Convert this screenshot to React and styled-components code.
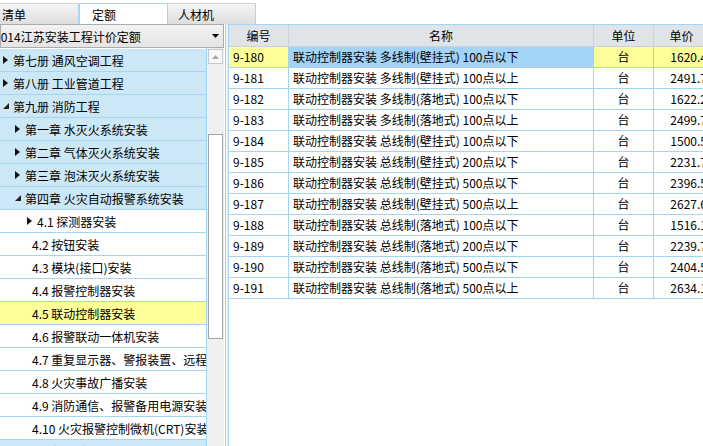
import styled, { createGlobalStyle } from 'styled-components'

const GlobalStyle = createGlobalStyle`
  html, body {
    margin: 0;
    padding: 0;
    background: #fff;
    overflow: hidden;
  }
  body {
    font-family: "Noto Sans CJK SC", "Noto Sans", sans-serif;
    font-size: 12px;
    color: #000;
  }
`

const treeRows = [
    { text: '第七册 通风空调工程', indent: 3, arrow: 'right', tone: 'blue' },
    { text: '第八册 工业管道工程', indent: 3, arrow: 'right', tone: 'blue' },
    { text: '第九册 消防工程', indent: 3, arrow: 'open', tone: 'blue' },
    { text: '第一章 水灭火系统安装', indent: 15, arrow: 'right', tone: 'blue' },
    { text: '第二章 气体灭火系统安装', indent: 15, arrow: 'right', tone: 'blue' },
    { text: '第三章 泡沫灭火系统安装', indent: 15, arrow: 'right', tone: 'blue' },
    { text: '第四章 火灾自动报警系统安装', indent: 15, arrow: 'open', tone: 'blue' },
    { text: '4.1 探测器安装', indent: 27, arrow: 'right', tone: 'white' },
    { text: '4.2 按钮安装', indent: 32, tone: 'white' },
    { text: '4.3 模块(接口)安装', indent: 32, tone: 'white' },
    { text: '4.4 报警控制器安装', indent: 32, tone: 'white' },
    { text: '4.5 联动控制器安装', indent: 32, tone: 'yellow' },
    { text: '4.6 报警联动一体机安装', indent: 32, tone: 'white' },
    { text: '4.7 重复显示器、警报装置、远程控制器安装', indent: 32, tone: 'white' },
    { text: '4.8 火灾事故广播安装', indent: 32, tone: 'white' },
    { text: '4.9 消防通信、报警备用电源安装', indent: 32, tone: 'white' },
    { text: '4.10 火灾报警控制微机(CRT)安装', indent: 32, tone: 'white' },
    { text: '第五章 消防系统调试', indent: 15, arrow: 'right', tone: 'blue' },
]

const items = [
    ['9-180', '联动控制器安装 多线制(壁挂式) 100点以下', '台', '1620.4'],
    ['9-181', '联动控制器安装 多线制(壁挂式) 100点以上', '台', '2491.7'],
    ['9-182', '联动控制器安装 多线制(落地式) 100点以下', '台', '1622.2'],
    ['9-183', '联动控制器安装 多线制(落地式) 100点以上', '台', '2499.7'],
    ['9-184', '联动控制器安装 总线制(壁挂式) 100点以下', '台', '1500.5'],
    ['9-185', '联动控制器安装 总线制(壁挂式) 200点以下', '台', '2231.7'],
    ['9-186', '联动控制器安装 总线制(壁挂式) 500点以下', '台', '2396.5'],
    ['9-187', '联动控制器安装 总线制(壁挂式) 500点以上', '台', '2627.6'],
    ['9-188', '联动控制器安装 总线制(落地式) 100点以下', '台', '1516.1'],
    ['9-189', '联动控制器安装 总线制(落地式) 200点以下', '台', '2239.7'],
    ['9-190', '联动控制器安装 总线制(落地式) 500点以下', '台', '2404.5'],
    ['9-191', '联动控制器安装 总线制(落地式) 500点以上', '台', '2634.1'],
]

const tones = {
    blue: '#cce8f7',
    white: '#ffffff',
    yellow: '#ffff99',
}

const ArrowIcon = ({ open }) =>
    open ? (
        <svg width='6' height='6' viewBox='0 0 6 6'>
            <path d='M6 0 L6 6 L0 6 Z' fill='#222' />
        </svg>
    ) : (
        <svg width='5' height='8' viewBox='0 0 5 8'>
            <path d='M0 0 L5 4 L0 8 Z' fill='#111' />
        </svg>
    )

const App = () => {
    return (
        <>
            <GlobalStyle />
            <Page>
                <TabStrip>
                    <Tab $width={79} $pad={2}>清单</Tab>
                    <Tab $width={89} $pad={12} $active>定额</Tab>
                    <Tab $width={88} $pad={10}>人材机</Tab>
                </TabStrip>
                <Body>
                    <LeftPanel>
                        <Dropdown>
                            <DropdownText>2014江苏安装工程计价定额</DropdownText>
                            <svg width='7' height='4' viewBox='0 0 7 4'>
                                <path d='M0 0 L7 0 L3.5 4 Z' fill='#000' />
                            </svg>
                        </Dropdown>
                        <TreeWrap>
                            <TreeList>
                                {treeRows.map((row) => (
                                    <TreeRow key={row.text} $indent={row.indent} $tone={row.tone}>
                                        {row.arrow && (
                                            <Arrow>
                                                <ArrowIcon open={row.arrow === 'open'} />
                                            </Arrow>
                                        )}
                                        <TreeText>{row.text}</TreeText>
                                    </TreeRow>
                                ))}
                            </TreeList>
                            <ScrollBar>
                                <ScrollButton>
                                    <svg width='7' height='4' viewBox='0 0 7 4'>
                                        <path d='M0 4 L7 4 L3.5 0 Z' fill='#a8a8a8' />
                                    </svg>
                                </ScrollButton>
                                <ScrollThumb />
                            </ScrollBar>
                        </TreeWrap>
                    </LeftPanel>
                    <Splitter />
                    <TablePanel>
                        <HeadRow>
                            <HeadCell>编号</HeadCell>
                            <HeadCell>名称</HeadCell>
                            <HeadCell>单位</HeadCell>
                            <HeadCell>单价</HeadCell>
                        </HeadRow>
                        {items.map((item, i) => (
                            <DataRow key={item[0]}>
                                <Cell $bg={i === 0 ? '#ffff99' : '#fff'}>{item[0]}</Cell>
                                <Cell $bg={i === 0 ? '#a4d3f8' : '#fff'}>{item[1]}</Cell>
                                <Cell $bg={i === 0 ? '#ffff99' : '#fff'} $align='center'>
                                    {item[2]}
                                </Cell>
                                <Cell $bg={i === 0 ? '#ffff99' : '#fff'} $align='right'>
                                    {item[3]}
                                </Cell>
                            </DataRow>
                        ))}
                    </TablePanel>
                </Body>
            </Page>
        </>
    )
}

export default App

const Page = styled.div`
    width: 703px;
    height: 446px;
    overflow: hidden;
    display: grid;
    grid-template-rows: 24px 1fr;
`

const TabStrip = styled.div`
    display: flex;
    align-items: flex-end;
    background: #fff;
`

const Tab = styled.div`
    box-sizing: border-box;
    width: ${(p) => p.$width}px;
    height: 21px;
    padding-left: ${(p) => p.$pad}px;
    line-height: 21px;
    font-size: 12px;
    background: ${(p) => (p.$active ? '#fff' : 'linear-gradient(#f4f4f4, #dedede)')};
    border: 1px solid ${(p) => (p.$active ? '#a9d4f2' : '#d4d4d4')};
    border-bottom: none;
    border-right-color: #a9d4f2;
    border-left: ${(p) => (p.$active ? '1px solid #a9d4f2' : 'none')};
    white-space: nowrap;
`

const Body = styled.div`
    display: flex;
    min-height: 0;
`

const LeftPanel = styled.div`
    width: 225px;
    display: flex;
    flex-direction: column;
    min-height: 0;
`

const Dropdown = styled.div`
    box-sizing: border-box;
    height: 24px;
    width: 224px;
    display: flex;
    align-items: center;
    justify-content: space-between;
    padding-right: 4px;
    border: 1px solid #acacac;
    background: linear-gradient(#f3f3f3, #e4e4e4);
    overflow: hidden;
`

const DropdownText = styled.span`
    font-size: 12px;
    text-indent: -7px;
    white-space: nowrap;
`

const TreeWrap = styled.div`
    display: flex;
    flex: 1;
    min-height: 0;
`

const TreeList = styled.div`
    width: 207px;
    padding-top: 1px;
    border-right: 1px solid #a6d5f2;
    box-sizing: border-box;
    overflow: hidden;
`

const TreeRow = styled.div`
    box-sizing: border-box;
    height: 23px;
    display: flex;
    align-items: center;
    padding-left: ${(p) => p.$indent}px;
    background: ${(p) => tones[p.$tone]};
    border-bottom: 1px solid #a6d5f2;
    overflow: hidden;
`

const Arrow = styled.span`
    width: 10px;
    flex: none;
    display: flex;
    align-items: center;
`

const TreeText = styled.span`
    white-space: nowrap;
    font-size: 12px;
`

const ScrollBar = styled.div`
    width: 17px;
    background: #f0f0f0;
    display: flex;
    flex-direction: column;
    align-items: center;
    padding-top: 1px;
`

const ScrollButton = styled.div`
    box-sizing: border-box;
    width: 15px;
    height: 15px;
    border: 1px solid #c8c8c8;
    background: #f8f8f8;
    display: flex;
    align-items: center;
    justify-content: center;
`

const ScrollThumb = styled.div`
    box-sizing: border-box;
    width: 15px;
    height: 205px;
    margin-top: 70px;
    border: 1px solid #a4a4a4;
    background: #fff;
`

const Splitter = styled.div`
    width: 2px;
    border-left: 1px solid #a6d5f2;
    background: #f0f0f0;
`

const TablePanel = styled.div`
    flex: 1;
    border-left: 1px solid #a6d5f2;
    border-top: 1px solid #a6d5f2;
    overflow: hidden;
    background: #fff;
`

const HeadRow = styled.div`
    display: grid;
    grid-template-columns: 60px 305px 60px 56px;
    height: 22px;
    background: #e0e3e8;
`

const HeadCell = styled.div`
    border-right: 1px solid #c9d3de;
    border-bottom: 1px solid #c9d3de;
    text-align: center;
    line-height: 21px;
    font-size: 12px;
    white-space: nowrap;
`

const DataRow = styled.div`
    display: grid;
    grid-template-columns: 60px 305px 60px 56px;
    height: 21px;
`

const Cell = styled.div`
    box-sizing: border-box;
    background: ${(p) => p.$bg};
    border-right: 1px solid #a6d5f2;
    border-bottom: 1px solid #a6d5f2;
    padding: 0 ${(p) => (p.$align === 'right' ? '2px' : '4px')} 0 4px;
    line-height: 20px;
    font-size: 12px;
    text-align: ${(p) => p.$align || 'left'};
    white-space: nowrap;
    overflow: hidden;
`
